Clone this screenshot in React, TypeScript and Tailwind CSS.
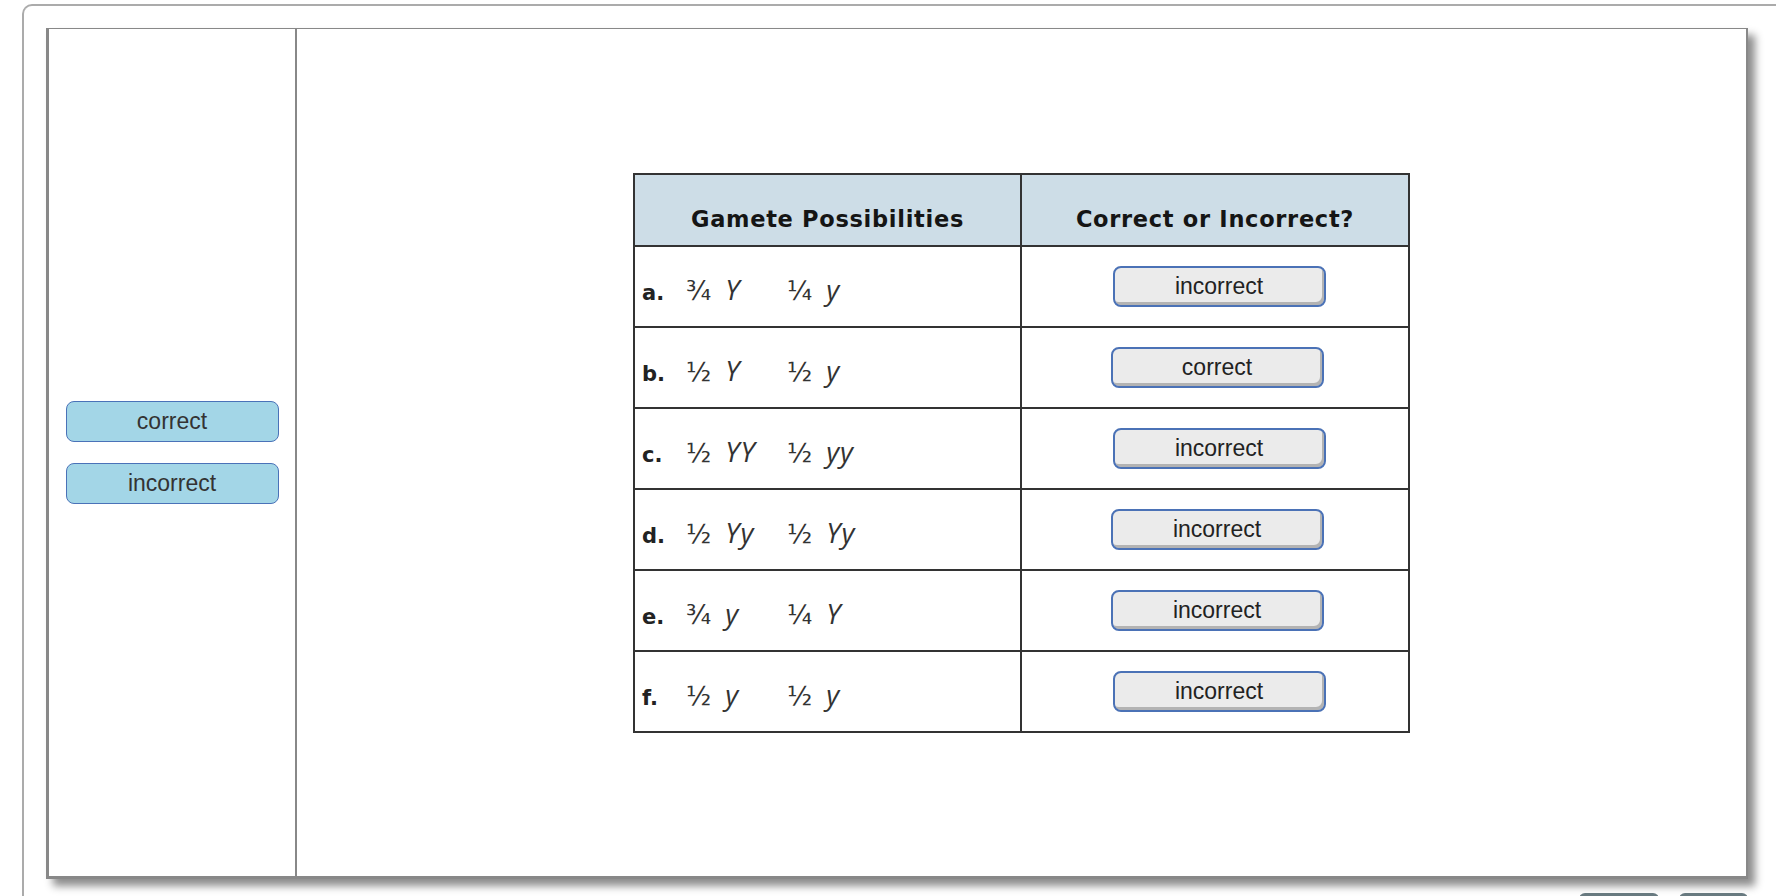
import React from "react";

type Row = {
  label: string;
  left: [string, string];
  right: [string, string];
  answer: string;
  shift: number;
};

const rows: Row[] = [
  { label: "a.", left: ["¾", "Y"], right: ["¼", "y"], answer: "incorrect", shift: 1 },
  { label: "b.", left: ["½", "Y"], right: ["½", "y"], answer: "correct", shift: 0 },
  { label: "c.", left: ["½", "YY"], right: ["½", "yy"], answer: "incorrect", shift: 1 },
  { label: "d.", left: ["½", "Yy"], right: ["½", "Yy"], answer: "incorrect", shift: 0 },
  { label: "e.", left: ["¾", "y"], right: ["¼", "Y"], answer: "incorrect", shift: 0 },
  { label: "f.", left: ["½", "y"], right: ["½", "y"], answer: "incorrect", shift: 1 },
];

function Gamete({ part }: { part: [string, string] }) {
  return (
    <span className="flex items-baseline">
      <span className="font-['DejaVu_Sans',sans-serif] text-[26px] leading-none text-[#333]">{part[0]}</span>
      <span className="ml-[14px] font-['Open_Sans',sans-serif] text-[28px] leading-none tracking-[1px] italic text-[#333]">
        {part[1]}
      </span>
    </span>
  );
}

function AnswerButton({ text }: { text: string }) {
  return (
    <div className="flex h-[41px] w-[213px] items-center justify-center rounded-[8px] border-2 border-[#4b72b6] bg-[#ebebeb] font-['Liberation_Sans',Arial,sans-serif] text-[23px] text-[#222] shadow-[inset_-2px_-3px_0_#b3b3b3]">
      {text}
    </div>
  );
}

function BankChip({ text }: { text: string }) {
  return (
    <div className="flex h-[41px] w-[213px] items-center justify-center rounded-[8px] border-[1.5px] border-[#4a72b8] bg-[#a3d6e7] font-['Liberation_Sans',Arial,sans-serif] text-[23px] text-[#333]">
      {text}
    </div>
  );
}

export default function App() {
  return (
    <div className="h-[896px] w-[1776px] overflow-hidden bg-white">
      <div className="ml-[22px] mt-[4px] w-[1800px] rounded-tl-[10px] border-l-2 border-t-2 border-[#ababab] pl-[22px] pt-[22px]">
        <div className="flex h-[851px] w-[1702px] border-b-[3px] border-l-[3px] border-r-2 border-t border-[#888] bg-white shadow-[7px_7px_8px_rgba(0,0,0,0.45)]">
          {/* answer bank */}
          <div className="flex w-[248px] flex-col items-center justify-center gap-[21px] border-r-2 border-[#888]">
            <BankChip text="correct" />
            <BankChip text="incorrect" />
          </div>

          {/* question table */}
          <div className="flex flex-1 items-center justify-center">
            <table className="border-collapse border-2 border-[#333]">
              <thead>
                <tr className="bg-[#cddde7]">
                  <th className="h-[72px] w-[387px] border-2 border-[#333] pt-[20px] text-center font-['DejaVu_Sans',Verdana,sans-serif] text-[22.5px] font-bold tracking-[0.7px] text-[#151515]">
                    Gamete Possibilities
                  </th>
                  <th className="h-[72px] w-[388px] border-2 border-[#333] pt-[20px] text-center font-['DejaVu_Sans',Verdana,sans-serif] text-[22.5px] font-bold tracking-[0.7px] text-[#151515]">
                    Correct or Incorrect?
                  </th>
                </tr>
              </thead>
              <tbody>
                {rows.map((row) => (
                  <tr key={row.label} className="h-[81px]">
                    <td className="border-2 border-[#333] pl-[7px] pt-[13px] align-middle">
                      <div className="flex items-baseline">
                        <span className="w-[44px] font-['DejaVu_Sans',Verdana,sans-serif] text-[21px] font-bold text-[#222]">
                          {row.label}
                        </span>
                        <span className="w-[101px]">
                          <Gamete part={row.left} />
                        </span>
                        <Gamete part={row.right} />
                      </div>
                    </td>
                    <td className="border-2 border-[#333] align-middle">
                      <div className={row.shift ? "flex justify-center pl-[8px]" : "flex justify-center pl-[4px]"}>
                        <AnswerButton text={row.answer} />
                      </div>
                    </td>
                  </tr>
                ))}
              </tbody>
            </table>
          </div>
        </div>

        <div className="mt-[14px] flex w-[1702px] justify-end gap-[20px]">
          <div className="h-[30px] w-[80px] rounded-[6px] bg-[#687a80]" />
          <div className="h-[30px] w-[69px] rounded-[6px] bg-[#687a80]" />
        </div>
      </div>
    </div>
  );
}
